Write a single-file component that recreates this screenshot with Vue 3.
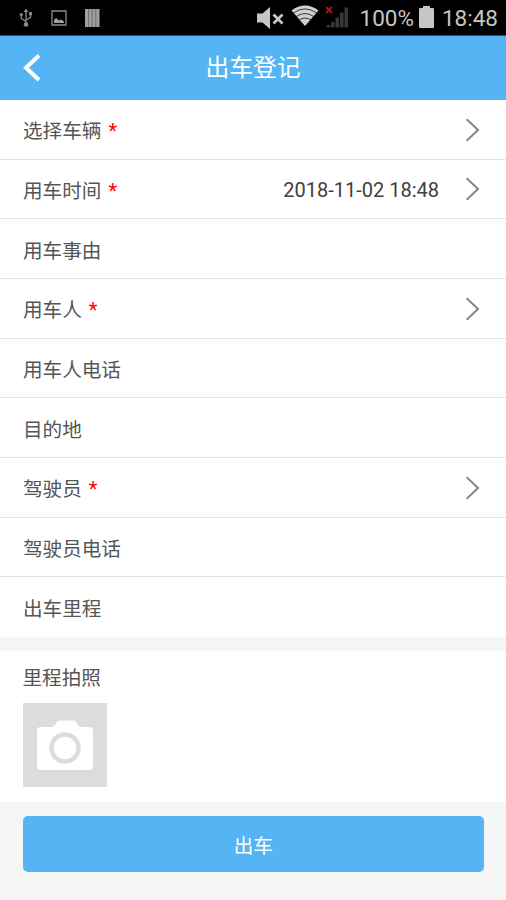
<script setup>
const rows = [
  { label: '选择车辆', required: true, arrow: true },
  { label: '用车时间', required: true, arrow: true, value: '2018-11-02 18:48' },
  { label: '用车事由' },
  { label: '用车人', required: true, arrow: true },
  { label: '用车人电话' },
  { label: '目的地' },
  { label: '驾驶员', required: true, arrow: true },
  { label: '驾驶员电话' },
  { label: '出车里程' },
]
</script>

<template>
  <div class="screen">
    <div class="status">
      <svg class="usb" width="14" height="20" viewBox="0 0 14 20" fill="none" stroke="#8c8c8c" stroke-width="1.3">
        <path d="M7 3v13M7 13.500 2.300 10.500V7M7 12l4.500-2.500V6" />
        <path d="M4.600 4 7 .5 9.400 4z" fill="#8c8c8c" stroke="none" />
        <circle cx="7" cy="16.500" r="2.300" fill="#8c8c8c" stroke="none" />
        <circle cx="2.300" cy="6.500" r="1.600" fill="#8c8c8c" stroke="none" />
        <path d="M10 4.200h3v3h-3z" fill="#8c8c8c" stroke="none" />
      </svg>
      <svg class="image" width="16" height="16" viewBox="0 0 16 16">
        <path d="M1 1h14v14H1z" fill="none" stroke="#8c8c8c" stroke-width="1.300" />
        <path d="M3 13v-3l2-2 2 1.500 1 1 1.500-1 1.500.5 2 1.500V13z" fill="#a0a0a0" />
      </svg>
      <svg class="bars" width="15" height="18" viewBox="0 0 15 18">
        <path d="M0 0h14.500v18H0z" fill="#a0a0a0" />
        <path d="M3.600 0v18M7.200 0v18M10.800 0v18" stroke="#555" stroke-width=".7" />
      </svg>
      <div class="system">
        <svg class="mute" width="27" height="24" viewBox="0 0 27 24">
          <path d="M0 7.500h5.500L13 1v22l-7.500-6.500H0z" fill="#c6c6c6" />
          <path d="m16.500 8.500 9 9m0-9-9 9" stroke="#c6c6c6" stroke-width="2.800" />
        </svg>
        <svg class="wifi" width="28" height="22" viewBox="0 0 28 22">
          <path d="M14 21 .5 5.500Q14-4.500 27.500 5.500z" fill="#d0d0d0" />
          <path d="M2 8.200q12-8.600 24 0M5 11.700q9-6.400 18 0M8 15.100q6-4.200 12 0" fill="none" stroke="#111" stroke-width=".8" />
        </svg>
        <svg class="signal" width="24" height="24" viewBox="0 0 24 24">
          <path d="M.5 20h3.600v2.500H.5zM5 17h3.600v5.500H5zM9.500 12.500h3.600v10H9.500zM14 7.500h3.600v15H14zM18.500 2.500h3.600v20h-3.600z" fill="#373737" />
          <path d="m0 2 6 6m0-6-6 6" stroke="#b01818" stroke-width="1.800" />
        </svg>
        <span class="percent">100%</span>
        <svg class="battery" width="15" height="22" viewBox="0 0 15 22">
          <path d="M4 0h7v2h3q1 0 1 1v18q0 1-1 1H1q-1 0-1-1V3q0-1 1-1h3z" fill="#c6c6c6" />
        </svg>
        <span class="clock">18:48</span>
      </div>
    </div>

    <header class="header">
      <svg class="back" width="20" height="30" viewBox="0 0 20 30">
        <path d="M18 2.500 5 14.800 18 27" fill="none" stroke="#fff" stroke-width="4" />
      </svg>
      <h1>出车登记</h1>
    </header>

    <div class="list">
      <div v-for="row in rows" :key="row.label" class="row">
        <span class="label">{{ row.label }}</span>
        <span v-if="row.required" class="star">*</span>
        <span class="value">{{ row.value }}</span>
        <svg v-if="row.arrow" class="arrow" width="14" height="24" viewBox="0 0 14 24">
          <path d="M.6 1.200 12 12 .6 22.800" fill="none" stroke="#858585" stroke-width="2.100" />
        </svg>
      </div>
    </div>

    <section class="photo">
      <span class="label">里程拍照</span>
      <div class="picker">
        <svg width="84" height="84" viewBox="0 0 84 84">
          <path d="M18 24h11q2 0 3-2l1.500-2.500q1-2 3-2h14q2 0 3 2L55 22q1 2 3 2h8q4 0 4 4v35q0 4-4 4H18q-4 0-4-4V28q0-4 4-4z" fill="#fff" />
          <circle cx="42" cy="45" r="13.500" fill="none" stroke="#dcdcdc" stroke-width="4.600" />
        </svg>
      </div>
    </section>

    <footer class="footer">
      <button class="submit">出车</button>
    </footer>
  </div>
</template>

<style>
body {
  background: #f5f5f5;
}
</style>

<style scoped>
.screen {
  width: 506px;
  height: 900px;
  overflow: hidden;
  background: #f5f5f5;
  font-family: Roboto, "Noto Sans CJK SC", sans-serif;
  color: #555;
}
svg {
  display: block;
  flex: none;
}
.status {
  box-sizing: border-box;
  height: 36px;
  padding-left: 19px;
  padding-right: 8px;
  display: flex;
  align-items: center;
  background: #000;
  border-bottom: 1px solid #29485c;
}
.image {
  margin-left: 18px;
}
.bars {
  margin-left: 18px;
}
.system {
  margin-left: auto;
  display: flex;
  align-items: center;
  color: #c6c6c6;
  font-size: 22.500px;
  line-height: 37px;
}
.mute {
  margin-top: 1px;
}
.wifi {
  margin: 0 7px 3px;
}
.signal {
  margin-bottom: 1px;
}
.percent {
  margin-left: 10px;
  padding-top: 1px;
}
.battery {
  margin: 0 8px 1px 5px;
}
.clock {
  padding-top: 1px;
}
.header {
  height: 64px;
  display: grid;
  grid-template-columns: 72px 1fr 72px;
  align-items: center;
  background: #55b5f4;
}
.back {
  margin-left: 21px;
}
h1 {
  margin: 0;
  text-align: center;
  font-size: 23.800px;
  line-height: 32px;
  font-weight: 400;
  color: #fff;
}
.list {
  height: 537px;
  display: grid;
  grid-template-rows: repeat(9, 1fr);
  background: #fff;
}
.row {
  display: flex;
  align-items: center;
  padding: 1px 26px 0 23px;
  border-bottom: 1px solid #e4e4e4;
}
.row:last-child {
  border-bottom-color: #fff;
}
.label {
  padding-top: 5px;
  font-size: 19.600px;
  line-height: 28px;
}
.star {
  padding-top: 3px;
  margin-left: 7px;
  font-size: 20px;
  font-weight: 400;
  line-height: 28px;
  color: #f00;
}
.value {
  padding-top: 1px;
  margin-left: auto;
  font-size: 20px;
  color: #404040;
}
.arrow {
  margin-left: 27px;
}
.photo {
  box-sizing: border-box;
  height: 151px;
  margin-top: 14px;
  padding: 9px 22.500px 11px;
  background: #fff;
}
.photo .label {
  display: block;
}
.picker {
  width: 84px;
  height: 84px;
  margin-top: 10px;
  background: #dcdcdc;
}
.footer {
  padding: 14px 22px 0 22.500px;
}
.submit {
  display: block;
  width: 100%;
  height: 56px;
  padding: 0;
  border: 0;
  border-radius: 5px;
  background: #55b5f4;
  color: #fff;
  font-family: inherit;
  font-size: 19.600px;
}
</style>
